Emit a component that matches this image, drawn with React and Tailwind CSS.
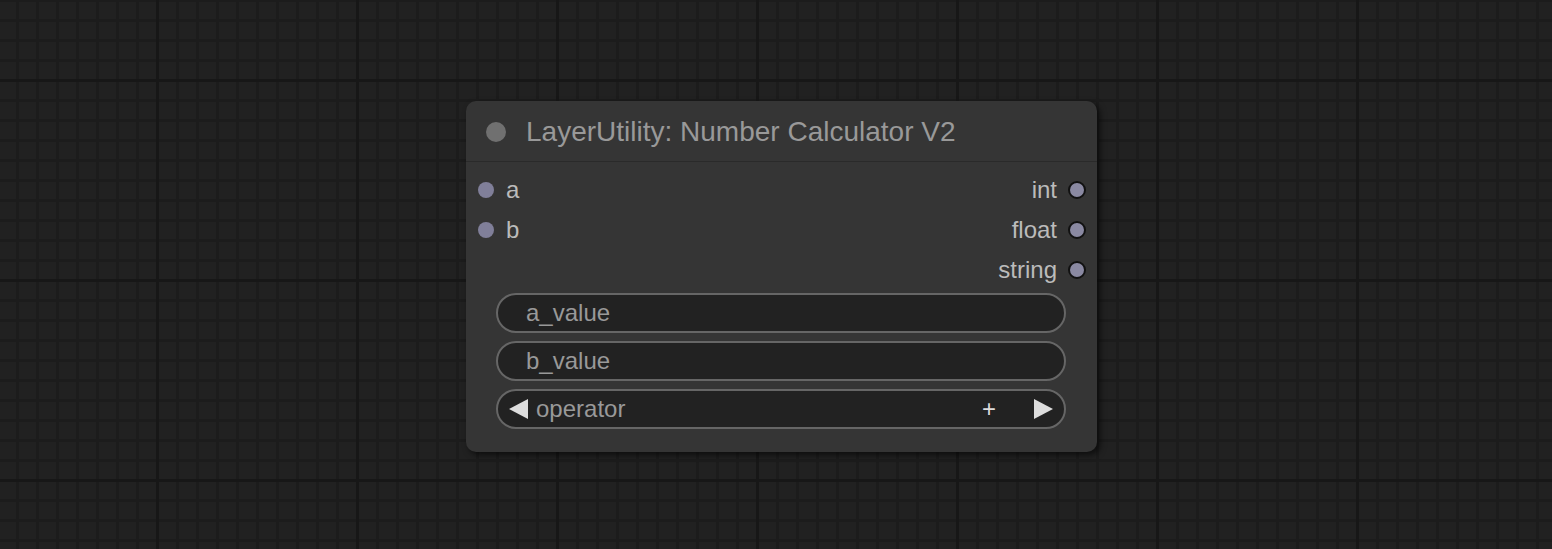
import { useState } from 'react'

const FONT = { fontFamily: '"Liberation Sans", Arial, sans-serif' }

const inputs = ['a', 'b', null]
const outputs = ['int', 'float', 'string']

function TextWidget({ label }) {
  return (
    <div className="ml-[30px] flex h-10 w-[570px] items-center rounded-full border-2 border-[#666] bg-[#222] pl-[28px] text-[24px] text-[#999]">
      {label}
    </div>
  )
}

function ComboWidget({ label, value }) {
  return (
    <div className="ml-[30px] flex h-10 w-[570px] items-center rounded-full border-2 border-[#666] bg-[#222] px-[11px] text-[24px]">
      <svg width="19" height="20" viewBox="0 0 19 20" className="shrink-0">
        <path d="M0 10 L19 0 L19 20 Z" fill="#ddd" />
      </svg>
      <span className="ml-[8px] text-[#999]">{label}</span>
      <span className="ml-auto mr-[38px] text-[#ddd]">{value}</span>
      <svg width="19" height="20" viewBox="0 0 19 20" className="shrink-0">
        <path d="M19 10 L0 0 L0 20 Z" fill="#ddd" />
      </svg>
    </div>
  )
}

export default function App() {
  const [op] = useState('+')
  return (
    <div
      className="relative h-[549px] w-[1552px] overflow-hidden bg-[#212121] [background-image:linear-gradient(to_right,#171717_3px,transparent_3px),linear-gradient(to_bottom,#171717_3px,transparent_3px),linear-gradient(to_right,#1c1c1c_3px,transparent_3px),linear-gradient(to_bottom,#1c1c1c_3px,transparent_3px)] [background-size:200px_200px,200px_200px,20px_20px,20px_20px] [background-position:156px_79px,156px_79px,16px_-1px,16px_-1px]"
      style={FONT}
    >
      <div className="absolute left-[466px] top-[101px] w-[631px] rounded-[10px] bg-[#353535] pb-[23px] shadow-[3px_3px_6px_rgba(0,0,0,0.6)]">
        <div className="flex h-[61px] items-center border-b border-[#2a2a2a] pl-5 pt-[2px]">
          <div className="h-5 w-5 rounded-full bg-[#707070]" />
          <span className="ml-5 text-[28px] text-[#999]">LayerUtility: Number Calculator V2</span>
        </div>
        <div className="pt-2">
          {outputs.map((out, i) => (
            <div key={out} className="flex h-10 items-center text-[24px] text-[#bbb]">
              <div className="flex items-center pl-3">
                {inputs[i] && (
                  <>
                    <div className="h-4 w-4 rounded-full bg-[#807f99]" />
                    <span className="ml-3">{inputs[i]}</span>
                  </>
                )}
              </div>
              <div className="ml-auto flex items-center pr-[11px]">
                <span>{out}</span>
                <div className="ml-[11px] h-[18px] w-[18px] rounded-full border-2 border-[#111] bg-[#8a89a2]" />
              </div>
            </div>
          ))}
        </div>
        <div className="mt-[3px] flex flex-col gap-2">
          <TextWidget label="a_value" />
          <TextWidget label="b_value" />
          <ComboWidget label="operator" value={op} />
        </div>
      </div>
    </div>
  )
}
